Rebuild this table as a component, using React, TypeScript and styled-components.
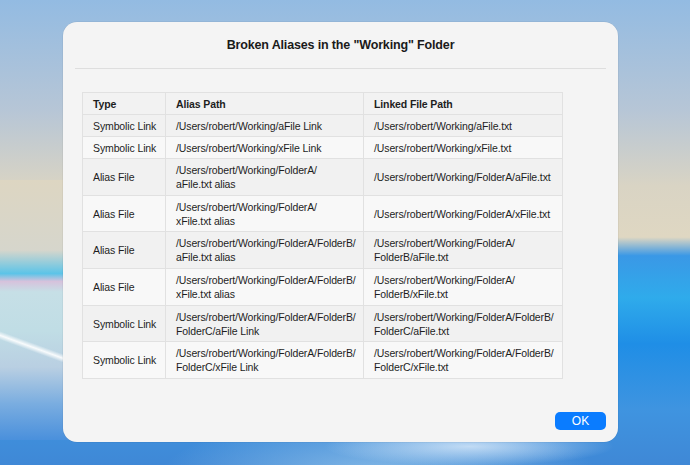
import styled, { createGlobalStyle } from 'styled-components';

const GlobalStyle = createGlobalStyle`
  html, body {
    margin: 0;
    padding: 0;
  }
  body {
    font-family: "Liberation Sans", Arial, sans-serif;
  }
`;

const Desktop = styled.div`
  width: 690px;
  height: 465px;
  box-sizing: border-box;
  padding: 22px 0 0 63px;
  overflow: hidden;
  background:
    linear-gradient(200deg, transparent 0 45%, rgba(255, 255, 255, 0.9) 48.5%, transparent 52%) 0 300px / 70px 100px no-repeat,
    linear-gradient(
      180deg,
      #ddd6c2 0%,
      #d6d6cc 27%,
      #5cc4e8 36%,
      #d6c2dc 39%,
      #c6dfe6 43%,
      #c0dde5 58%,
      #b9cfe2 72%,
      #7aade0 86%,
      #4a90dc 100%
    ) 0 180px / 70px 260px no-repeat,
    radial-gradient(ellipse 30% 6% at 68% 96%, rgba(220, 235, 250, 0.8), transparent 70%),
    radial-gradient(ellipse 45% 18% at 55% 102%, rgba(140, 190, 232, 0.9), transparent 70%),
    linear-gradient(
      180deg,
      #93bbe2 0%,
      #b7c6d6 24%,
      #d9d4c4 40%,
      #dfd7c2 51%,
      #3a98e6 55%,
      #2fabeb 64%,
      #1f8ee6 74%,
      #3f94e0 88%,
      #3f88d6 100%
    );
`;

const Dialog = styled.div`
  width: 555px;
  height: 420px;
  box-sizing: border-box;
  background: #f4f4f4;
  border-radius: 14px;
  display: flex;
  flex-direction: column;
  padding: 0 12px 12px 12px;
  box-shadow: 0 0 0 0.5px rgba(0, 0, 0, 0.08);
`;

const Title = styled.h1`
  margin: 0;
  height: 46px;
  display: flex;
  align-items: center;
  justify-content: center;
  font-size: 12.5px;
  font-weight: 700;
  color: #1a1a1a;
  letter-spacing: -0.15px;
  border-bottom: 1px solid #dedede;
`;

const TableWrap = styled.div`
  flex: 1;
  padding: 23px 0 0 7px;
`;

const Table = styled.table`
  border-collapse: collapse;
  width: 480px;
  font-size: 10.5px;
  letter-spacing: -0.12px;
  color: #1e1e1e;
  table-layout: fixed;
`;

const Cell = styled.td<{ $head?: boolean }>`
  border: 1px solid #e1e1e1;
  padding: 0 10px;
  line-height: 14px;
  height: ${p => (p.$head ? '21px' : 'auto')};
  font-weight: ${p => (p.$head ? 700 : 400)};
  vertical-align: middle;
  text-align: left;
  white-space: nowrap;
`;

const Row = styled.tr<{ $tall?: boolean; $shade?: boolean }>`
  height: ${p => (p.$tall ? '36.7px' : '22px')};
  background: ${p => (p.$shade ? '#f1f1f1' : '#f8f8f8')};
`;

const HeadRow = styled.tr`
  background: #f2f2f2;
`;

const Footer = styled.div`
  display: flex;
  justify-content: flex-end;
`;

const OkButton = styled.button`
  width: 51px;
  height: 18px;
  border: none;
  border-radius: 5px;
  background: #0a7cff;
  color: #fff;
  font-family: inherit;
  font-size: 12px;
  padding: 0;
`;

const rows: { type: string; alias: string[]; linked: string[] }[] = [
  { type: 'Symbolic Link', alias: ['/Users/robert/Working/aFile Link'], linked: ['/Users/robert/Working/aFile.txt'] },
  { type: 'Symbolic Link', alias: ['/Users/robert/Working/xFile Link'], linked: ['/Users/robert/Working/xFile.txt'] },
  { type: 'Alias File', alias: ['/Users/robert/Working/FolderA/', 'aFile.txt alias'], linked: ['/Users/robert/Working/FolderA/aFile.txt'] },
  { type: 'Alias File', alias: ['/Users/robert/Working/FolderA/', 'xFile.txt alias'], linked: ['/Users/robert/Working/FolderA/xFile.txt'] },
  { type: 'Alias File', alias: ['/Users/robert/Working/FolderA/FolderB/', 'aFile.txt alias'], linked: ['/Users/robert/Working/FolderA/', 'FolderB/aFile.txt'] },
  { type: 'Alias File', alias: ['/Users/robert/Working/FolderA/FolderB/', 'xFile.txt alias'], linked: ['/Users/robert/Working/FolderA/', 'FolderB/xFile.txt'] },
  { type: 'Symbolic Link', alias: ['/Users/robert/Working/FolderA/FolderB/', 'FolderC/aFile Link'], linked: ['/Users/robert/Working/FolderA/FolderB/', 'FolderC/aFile.txt'] },
  { type: 'Symbolic Link', alias: ['/Users/robert/Working/FolderA/FolderB/', 'FolderC/xFile Link'], linked: ['/Users/robert/Working/FolderA/FolderB/', 'FolderC/xFile.txt'] }
];

const Lines = ({ lines }: { lines: string[] }) => (
  <>
    {lines.map((l, i) => (
      <div key={i}>{l}</div>
    ))}
  </>
);

const App = () => {
  return (
    <Desktop>
      <GlobalStyle />
      <Dialog>
        <Title>Broken Aliases in the "Working" Folder</Title>
        <TableWrap>
          <Table>
            <colgroup>
              <col style={{ width: 83 }} />
              <col style={{ width: 198 }} />
              <col style={{ width: 199 }} />
            </colgroup>
            <thead>
              <HeadRow>
                <Cell as="th" $head>Type</Cell>
                <Cell as="th" $head>Alias Path</Cell>
                <Cell as="th" $head>Linked File Path</Cell>
              </HeadRow>
            </thead>
            <tbody>
              {rows.map((r, i) => (
                <Row key={i} $tall={r.alias.length > 1} $shade={i % 2 === 0}>
                  <Cell>{r.type}</Cell>
                  <Cell>
                    <Lines lines={r.alias} />
                  </Cell>
                  <Cell>
                    <Lines lines={r.linked} />
                  </Cell>
                </Row>
              ))}
            </tbody>
          </Table>
        </TableWrap>
        <Footer>
          <OkButton>OK</OkButton>
        </Footer>
      </Dialog>
    </Desktop>
  );
};

export default App;
